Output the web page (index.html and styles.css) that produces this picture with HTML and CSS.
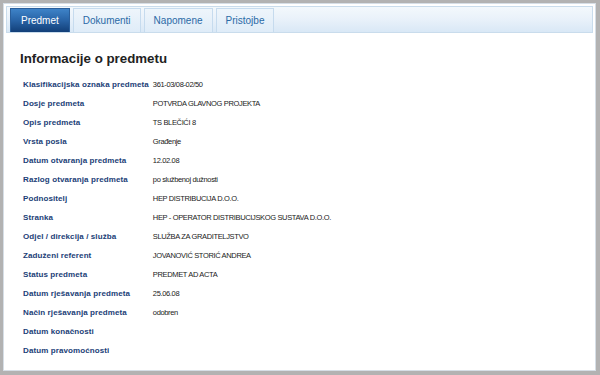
FILE: index.html
```html
<!DOCTYPE html>
<html lang="hr">
<head>
    <meta charset="UTF-8">
    <title>Predmet</title>
    <link rel="stylesheet" href="styles.css">
</head>
<body>
    <div class="panel">
        <!-- Kartice -->
        <div class="tabbar">
            <span class="tab active">Predmet</span>
            <span class="tab">Dokumenti</span>
            <span class="tab">Napomene</span>
            <span class="tab">Pristojbe</span>
        </div>

        <h1>Informacije o predmetu</h1>

        <table class="info">
            <tr><th>Klasifikacijska oznaka predmeta</th><td>361-03/08-02/50</td></tr>
            <tr><th>Dosje predmeta</th><td>POTVRDA GLAVNOG PROJEKTA</td></tr>
            <tr><th>Opis predmeta</th><td>TS BLEČIĆI 8</td></tr>
            <tr><th>Vrsta posla</th><td>Građenje</td></tr>
            <tr><th>Datum otvaranja predmeta</th><td>12.02.08</td></tr>
            <tr><th>Razlog otvaranja predmeta</th><td>po službenoj dužnosti</td></tr>
            <tr><th>Podnositelj</th><td>HEP DISTRIBUCIJA D.O.O.</td></tr>
            <tr><th>Stranka</th><td>HEP - OPERATOR DISTRIBUCIJSKOG SUSTAVA D.O.O.</td></tr>
            <tr><th>Odjel / direkcija / služba</th><td>SLUŽBA ZA GRADITELJSTVO</td></tr>
            <tr><th>Zaduženi referent</th><td>JOVANOVIĆ STORIĆ ANDREA</td></tr>
            <tr><th>Status predmeta</th><td>PREDMET AD ACTA</td></tr>
            <tr><th>Datum rješavanja predmeta</th><td>25.06.08</td></tr>
            <tr><th>Način rješavanja predmeta</th><td>odobren</td></tr>
            <tr><th>Datum konačnosti</th><td></td></tr>
            <tr><th>Datum pravomoćnosti</th><td></td></tr>
        </table>
    </div>
</body>
</html>
```

FILE: styles.css
```css
html, body {
    margin: 0;
    height: 100%;
}
body {
    background-color: #b2b2b2;
    font-family: "Liberation Sans", Arial, sans-serif;
    padding: 3px 4px 4px 3px;
    box-sizing: border-box;
}
.panel {
    background-color: #fff;
    border: 1px solid #d6dee6;
    height: 100%;
    box-sizing: border-box;
    padding: 2px;
}
.tabbar {
    height: 27px;
    box-sizing: border-box;
    border: 1px solid #c9dcec;
    background: linear-gradient(#f3f8fc, #eaf2fa 45%, #d9e8f6);
    padding: 2px 0 0 3px;
    display: flex;
    align-items: flex-end;
    gap: 3px;
}
.tab {
    height: 24px;
    box-sizing: border-box;
    padding: 0 9px;
    display: flex;
    align-items: center;
    font-size: 10px;
    color: #2a6aa6;
    background: linear-gradient(#eef5fb, #dfecf8);
    border: 1px solid #c6dbee;
    border-bottom: none;
}
.tab.active {
    padding: 0 10px;
    color: #fff;
    background: linear-gradient(#3e83c8, #2863a6 50%, #123f78);
    border-color: #2a5f9c;
}
h1 {
    font-size: 13.3px;
    color: #222;
    margin: 18px 0 9px 14px;
}
.info {
    border-collapse: collapse;
    margin-left: 17px;
}
.info th, .info td {
    height: 19px;
    padding: 0;
    text-align: left;
    vertical-align: middle;
    white-space: nowrap;
}
.info th {
    font-size: 8px;
    letter-spacing: 0.1px;
    color: #1b3e77;
    padding-right: 4px;
}
.info td {
    font-size: 7.5px;
    letter-spacing: -0.35px;
    color: #1a1a1a;
}
```
